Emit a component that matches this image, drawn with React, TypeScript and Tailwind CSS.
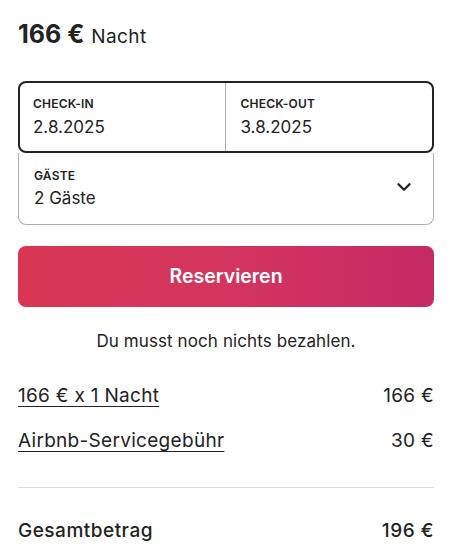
import { ChevronDown } from "lucide-react";

const font = { fontFamily: "Inter, 'Noto Sans', sans-serif" };

export default function App() {
  return (
    <div className="w-[450px] h-[559px] bg-white text-[#222] pl-[18px] pr-[16px] pt-[20px] overflow-hidden" style={font}>
      {/* Price */}
      <div className="flex items-baseline gap-[7px] h-[28px] leading-[28px]">
        <span className="text-[25px] font-bold tracking-[0px]">166 €</span>
        <span className="text-[19px] tracking-[0.4px]">Nacht</span>
      </div>

      {/* Dates + guests */}
      <div className="mt-[33px]">
        <div className="flex h-[72px] border-2 border-[#222] rounded-lg">
          <div className="flex-1 border-r border-[#b0b0b0] pl-[13px] pt-[13px]">
            <p className="text-[12px] font-semibold leading-[15px] tracking-[0.2px]">CHECK-IN</p>
            <p className="text-[17px] leading-[24px] mt-[4px]">2.8.2025</p>
          </div>
          <div className="flex-1 pl-[15px] pt-[13px]">
            <p className="text-[12px] font-semibold leading-[15px] tracking-[0.2px]">CHECK-OUT</p>
            <p className="text-[17px] leading-[24px] mt-[4px]">3.8.2025</p>
          </div>
        </div>
        <div className="flex items-center h-[72px] border border-t-0 border-[#b0b0b0] rounded-b-lg pl-[15px] pr-[18px]">
          <div className="flex-1 pt-[1px]">
            <p className="text-[12px] font-semibold leading-[15px] tracking-[0.2px]">GÄSTE</p>
            <p className="text-[17px] leading-[24px] mt-[3px]">2 Gäste</p>
          </div>
          <ChevronDown size={22} strokeWidth={2.5} className="-mt-[4px]" />
        </div>
      </div>

      {/* Reserve */}
      <button className="mt-[21px] w-full h-[61px] rounded-lg bg-gradient-to-r from-[#d93653] via-[#d3355e] to-[#c62a65] text-white text-[19.5px] font-semibold">
        Reservieren
      </button>
      <p className="text-center text-[17px] leading-[24px] mt-[22px] tracking-[0.1px]">Du musst noch nichts bezahlen.</p>

      {/* Breakdown */}
      <div className="mt-[30px] flex flex-col gap-[19px] text-[19px] leading-[26px] tracking-[0.3px]">
        <div className="flex justify-between">
          <span className="underline underline-offset-[4px] decoration-1">166 € x 1 Nacht</span>
          <span>166 €</span>
        </div>
        <div className="flex justify-between">
          <span className="underline underline-offset-[4px] decoration-1">Airbnb-Servicegebühr</span>
          <span>30 €</span>
        </div>
      </div>
      <div className="h-px bg-[#dddddd] mt-[33px]" />
      <div className="flex justify-between mt-[30px] text-[19px] leading-[26px] font-medium tracking-[0.5px]">
        <span>Gesamtbetrag</span>
        <span>196 €</span>
      </div>
    </div>
  );
}
